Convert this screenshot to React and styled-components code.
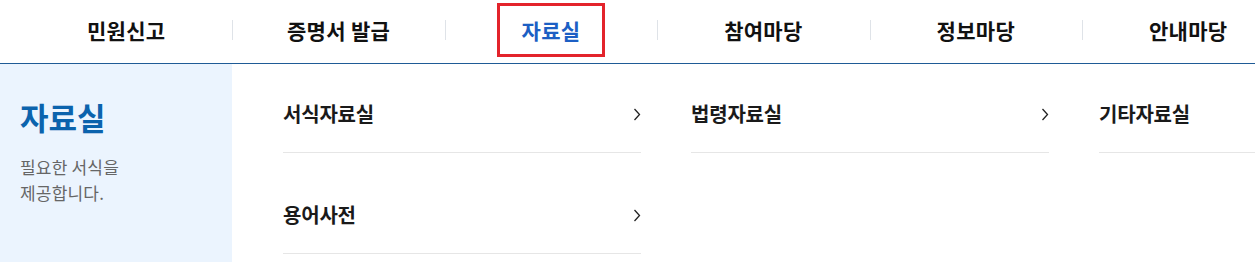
import React from 'react'
import styled, { createGlobalStyle } from 'styled-components'

const GlobalStyle = createGlobalStyle`
  html, body {
    margin: 0;
    padding: 0;
    background: #fff;
    overflow: hidden;
  }
  body {
    font-family: 'Noto Sans CJK KR', 'Noto Sans', sans-serif;
    color: #111;
  }
`

const Page = styled.div`
  width: 1255px;
  height: 262px;
  overflow: hidden;
`

const TopNav = styled.nav`
  display: flex;
  height: 63px;
  padding-left: 20px;
  border-bottom: 1px solid #1f5b96;
  width: 1400px;
`

const NavItem = styled.div`
  position: relative;
  flex: 0 0 212.4px;
  display: flex;
  align-items: center;
  justify-content: center;

  &::before {
    content: '';
    display: ${p => (p.$first ? 'none' : 'block')};
    position: absolute;
    left: 0;
    top: 20px;
    height: 20px;
    width: 1px;
    background: #dfe3e8;
  }
`

const NavLink = styled.a`
  display: flex;
  align-items: center;
  justify-content: center;
  font-size: 21px;
  font-weight: 700;
  letter-spacing: 0.3px;
  text-decoration: none;
  color: ${p => (p.$active ? '#1c5fc4' : '#111')};
  box-sizing: border-box;
  height: 54px;
  margin-top: -3px;
  padding: 0 22px;
  border: 3px solid ${p => (p.$active ? '#e3232b' : 'transparent')};
`

const Mega = styled.div`
  display: flex;
  height: 198px;
`

const Intro = styled.div`
  flex: 0 0 232px;
  box-sizing: border-box;
  background: #ebf4fe;
  padding: 33px 20px 0;
`

const IntroTitle = styled.h2`
  margin: 0;
  font-size: 31px;
  line-height: 40px;
  font-weight: 700;
  color: #0b63ad;
  letter-spacing: 0;
`

const IntroText = styled.p`
  margin: 17px 0 0;
  font-size: 17px;
  line-height: 26px;
  color: #666;
  letter-spacing: 0.2px;
`

const Columns = styled.div`
  display: grid;
  grid-template-columns: repeat(3, 358px);
  column-gap: 50px;
  padding: 12px 0 0 51px;
  align-items: start;
`

const List = styled.ul`
  list-style: none;
  margin: 0;
  padding: 0;
  display: flex;
  flex-direction: column;
  gap: 24px;
`

const Row = styled.li`
  display: flex;
  align-items: center;
  justify-content: space-between;
  padding: 26px 0;
  border-bottom: 1px solid #e6e6e6;
  font-size: 20px;
  line-height: 24px;
  font-weight: 700;
  color: #1a1a1a;
  letter-spacing: -0.2px;
`

const Chevron = () => (
  <svg width="8" height="13" viewBox="0 0 8 13" fill="none">
    <path d="M1.5 1 L6.5 6.5 L1.5 12" stroke="#222" strokeWidth="1.3" />
  </svg>
)

const navs = ['민원신고', '증명서 발급', '자료실', '참여마당', '정보마당', '안내마당']
const columns = [['서식자료실', '용어사전'], ['법령자료실'], ['기타자료실']]

export default function App() {
  return (
    <Page>
      <GlobalStyle />
      <TopNav>
        {navs.map((n, i) => (
          <NavItem key={n} $first={i === 0}>
            <NavLink $active={n === '자료실'}>{n}</NavLink>
          </NavItem>
        ))}
      </TopNav>
      <Mega>
        <Intro>
          <IntroTitle>자료실</IntroTitle>
          <IntroText>
            필요한 서식을
            <br />
            제공합니다.
          </IntroText>
        </Intro>
        <Columns>
          {columns.map((col, i) => (
            <List key={i}>
              {col.map(item => (
                <Row key={item}>
                  {item}
                  <Chevron />
                </Row>
              ))}
            </List>
          ))}
        </Columns>
      </Mega>
    </Page>
  )
}
